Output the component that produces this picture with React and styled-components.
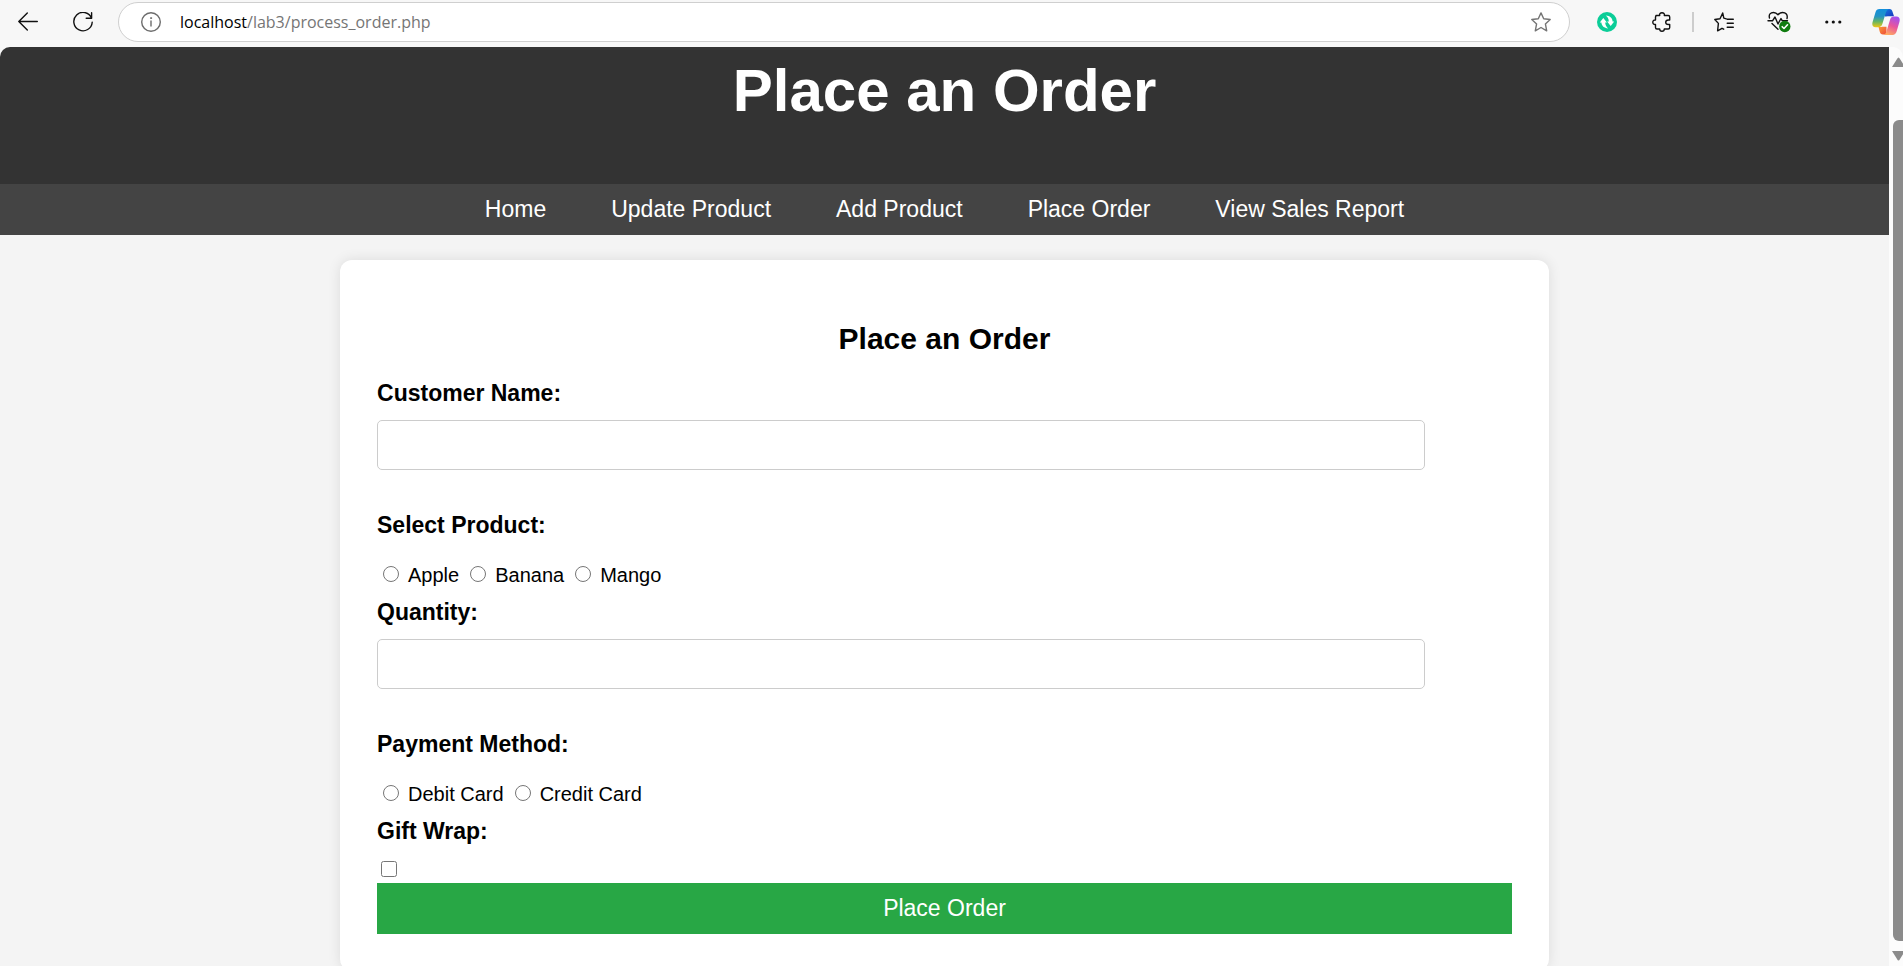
import React from "react";
import styled, { createGlobalStyle } from "styled-components";

const GlobalStyle = createGlobalStyle`
  * { box-sizing: border-box; }
  body {
    margin: 0;
    font-family: "Liberation Sans", Arial, sans-serif;
    color: #000;
    background: #f7f7f7;
  }
`;

const Browser = styled.div`
  height: 100vh;
  display: flex;
  flex-direction: column;
  overflow: hidden;
`;

/* ---------- browser toolbar ---------- */

const Toolbar = styled.div`
  flex: none;
  height: 47px;
  padding: 2px 0 5px 8px;
  display: flex;
  align-items: center;
  gap: 15px;
  background: #f7f7f7;
`;

const ToolButton = styled.button`
  flex: none;
  width: ${(p) => p.$width || 40}px;
  height: 40px;
  padding: 0;
  border: 0;
  background: none;
  display: flex;
  align-items: center;
  justify-content: center;
  color: ${(p) => p.$color || "#111"};
`;

const AddressBar = styled.div`
  flex: 1;
  min-width: 0;
  height: 40px;
  margin-right: 2px;
  padding: 0 18px 0 22px;
  display: flex;
  align-items: center;
  gap: 19px;
  border: 1px solid #cfcfcf;
  border-radius: 20px;
  background: #fff;
`;

const Address = styled.div`
  flex: 1;
  min-width: 0;
  overflow: hidden;
  white-space: nowrap;
  font-family: "Open Sans", "Noto Sans", sans-serif;
  font-size: 16px;
  line-height: 24px;
  color: #757575;
`;

const Host = styled.span`
  color: #000;
`;

const Separator = styled.span`
  flex: none;
  width: 2px;
  height: 20px;
  margin: 0 -5px;
  background: #cdcdcd;
`;

/* ---------- page area and scrollbar ---------- */

const Viewport = styled.div`
  flex: 1;
  min-height: 0;
  display: flex;
`;

const Page = styled.div`
  flex: 1;
  min-width: 0;
  overflow: hidden;
  border-top-left-radius: 10px;
  background: #f4f4f4;
`;

const Scrollbar = styled.div`
  flex: none;
  width: 14px;
  padding: 10px 0 5px 3px;
  display: flex;
  flex-direction: column;
  overflow: hidden;
  background: #fcfcfc;
  border-top-right-radius: 10px;
`;

const Thumb = styled.div`
  flex: 1;
  width: 15px;
  margin: 53px 0 10px 1px;
  border-radius: 6px;
  background: #8b8b8b;
`;

const Header = styled.header`
  padding: 10px 0 59px;
  background: #333;
  color: #fff;
  text-align: center;
`;

const Title = styled.h1`
  margin: 0;
  font-size: 60px;
  line-height: 68px;
`;

const Nav = styled.nav`
  padding: 12px 0 13px;
  display: flex;
  justify-content: center;
  gap: 65px;
  background: #444;
`;

const NavLink = styled.a`
  font-size: 23px;
  line-height: 26px;
  color: #fff;
  text-decoration: none;
`;

/* ---------- order form ---------- */

const Card = styled.main`
  width: 64%;
  margin: 25px auto;
  padding: 37px;
  border-radius: 12px;
  background: #fff;
  box-shadow: 0 0 13px rgba(0, 0, 0, 0.1);
`;

const FormTitle = styled.h2`
  margin: 25px 0 24px;
  font-size: 30px;
  line-height: 34px;
  text-align: center;
`;

const Form = styled.form`
  display: flex;
  flex-direction: column;
`;

const Label = styled.label`
  font-size: 23px;
  line-height: 26px;
  font-weight: bold;
`;

const TextInput = styled.input`
  width: calc(90% + 27px);
  height: 50px;
  margin: 14px 0 42px;
  padding: 12px;
  border: 1px solid #ccc;
  border-radius: 5px;
  font: 20px "Liberation Sans", Arial, sans-serif;
`;

const Fieldset = styled.fieldset`
  margin: 0 0 12px;
  padding: 0;
  border: 0;
`;

const Legend = styled.legend`
  padding: 0;
  font-size: 23px;
  line-height: 26px;
  font-weight: bold;
`;

const Options = styled.div`
  padding: 26px 0 0 6px;
  display: flex;
  gap: 11px;
`;

const Option = styled.label`
  display: flex;
  gap: 9px;
  font-size: 20px;
  line-height: 23px;
`;

const Radio = styled.input`
  width: 16px;
  height: 16px;
  margin: 2px 0 0;
`;

const Checkbox = styled.input`
  width: 16px;
  height: 16px;
  margin: 17px 0 6px 4px;
`;

const Submit = styled.button`
  height: 51px;
  padding: 0 0 2px;
  border: 0;
  background: #28a745;
  color: #fff;
  font: 23px/26px "Liberation Sans", Arial, sans-serif;
`;

/* ---------- icons ---------- */

const Icon = ({ size = 20, children, ...rest }) => (
  <svg
    width={size}
    height={size}
    viewBox={`0 0 ${size} ${size}`}
    fill="none"
    stroke="currentColor"
    strokeWidth="1.4"
    strokeLinecap="round"
    strokeLinejoin="round"
    aria-hidden="true"
    {...rest}
  >
    {children}
  </svg>
);

const BackIcon = () => (
  <Icon>
    <path d="M19.3 9.5H.8M9.3 1 .8 9.5 9.3 18" />
  </Icon>
);

const ReloadIcon = () => (
  <Icon>
    <path d="M18.5 6A9.2 9.2 0 1 0 19.2 10.2M18.6.8V6.2H13.2" />
  </Icon>
);

const InfoIcon = () => (
  <Icon stroke="#6c6c6c">
    <circle cx="10" cy="10" r="9.3" />
    <path d="M10 9v5" />
    <circle cx="10" cy="6.1" r=".6" fill="#6c6c6c" strokeWidth=".8" />
  </Icon>
);

const StarIcon = () => (
  <Icon>
    <path d="M10 .9 12.7 6.7 19.2 7.5 14.4 11.9 15.7 18.8 10 15.5 4.3 18.8 5.6 11.9.8 7.5 7.3 6.7Z" />
  </Icon>
);

const SyncIcon = () => (
  <Icon stroke="none">
    <circle cx="10" cy="10" r="10" fill="#0bcd98" />
    <path
      d="M6.300 6 2.800 10.600H4.400C4.600 14 7.200 16.300 11.200 16.400 9.300 15 8.300 13 8.200 10.600H9.900ZM13.700 14 17.200 9.400H15.600C15.400 6 12.800 3.700 8.800 3.600 10.700 5 11.700 7 11.800 9.400H10.100Z"
      fill="#fff"
    />
  </Icon>
);

const PuzzleIcon = () => (
  <Icon>
    <path d="M4 3.5H7.7C7.2 1.8 8.3.8 10 .8s2.800 1 2.300 2.700H16.200Q17.700 3.500 17.700 5V8H16.500C14.800 8 13.700 8.900 13.700 10.200s1.100 2.300 2.800 2.300h1.200v3Q17.700 17 16.200 17H12.300C12.300 18.500 11.400 19.300 10 19.300S7.700 18.500 7.700 17H5Q3.500 17 3.500 15.500V12.500C1.800 12.700.8 11.700.8 10.200S1.800 7.700 3.500 8V5Q3.500 3.500 5 3.500" />
  </Icon>
);

const FavoritesIcon = () => (
  <Icon>
    <path d="M13.200 7.300H19.300M13.200 11.200H19.300M13.200 15.200H19.300M12.300 6.900 9.800 6.200 8.700 1 6 6.700.8 7.500 4.400 11.400 3.600 18.800 8 16.300 9.700 17.200" />
  </Icon>
);

const HealthIcon = () => (
  <Icon size={24}>
    <path d="M2.500 8C1.500 4.500 3.500 2.500 6.500 2.500c2 0 3.400 1 4.500 2.300 1.100-1.300 2.500-2.300 4.500-2.300C18.700 2.500 21 4.500 20 8.500M1 10.800H5.500L8 7 11 14 14 8.500 15.300 10.800H20.500M5 13.500 11 19.200" />
    <circle cx="17.800" cy="16.500" r="5.700" fill="#107c10" stroke="none" />
    <path d="M15.200 16.700 17 18.500 20.500 14.800" stroke="#fff" strokeWidth="1.600" />
  </Icon>
);

const DotsIcon = () => (
  <Icon fill="currentColor" stroke="none">
    <circle cx="2.800" cy="10" r="1.600" />
    <circle cx="9.300" cy="10" r="1.600" />
    <circle cx="15.800" cy="10" r="1.600" />
  </Icon>
);

const CopilotIcon = () => (
  <Icon size={28} stroke="none">
    <defs>
      <linearGradient id="coolLeft" x1="0" y1="0" x2="0" y2="1">
        <stop offset="0" stopColor="#128fdc" />
        <stop offset=".4" stopColor="#2393c4" />
        <stop offset=".7" stopColor="#6ab760" />
        <stop offset="1" stopColor="#f2c713" />
      </linearGradient>
      <linearGradient id="warmRight" x1=".7" y1="0" x2=".3" y2="1">
        <stop offset="0" stopColor="#a24ff0" />
        <stop offset=".5" stopColor="#e9559b" />
        <stop offset="1" stopColor="#ffac60" />
      </linearGradient>
      <linearGradient id="blueTop" x1="0" y1="0" x2="1" y2="1">
        <stop offset="0" stopColor="#167be0" />
        <stop offset="1" stopColor="#1836bd" />
      </linearGradient>
      <linearGradient id="orangeBase" x1="0" y1="0" x2="1" y2="1">
        <stop offset="0" stopColor="#fa9c35" />
        <stop offset="1" stopColor="#ee493c" />
      </linearGradient>
    </defs>
    <path d="M12 1h5.500c1.800 0 2.600 1.200 3.100 3L22 8.300h-4c-1.800 0-3 .3-5 .2z" fill="url(#blueTop)" />
    <path d="M6.500 19C9 19 10.500 18.500 12.500 18.800h2L14.500 26.500H11c-2 0-2.800-1.200-3.300-3z" fill="url(#orangeBase)" />
    <path d="M7.500 1H17c-2 .5-2.800 2.500-3.400 4.500L10.500 15.500C9.800 18 8.500 19.300 6 19.300H3.500C.5 19.300-.2 17 .6 14L3.500 4.200C4.200 2.200 5.300 1 7.500 1z" fill="url(#coolLeft)" />
    <path d="M20.500 27H11.500c2-.5 2.700-2.500 3.300-4.500l3-10C18.500 10 19.500 8.500 22 8.500h2.500c3 0 3.700 2.400 2.900 5.500l-2.900 9.800c-.7 2-1.800 3.200-4 3.200z" fill="url(#warmRight)" />
  </Icon>
);

const ArrowIcon = ({ down }) => (
  <svg width="13" height="10" viewBox="0 0 13 10" fill="#8b8b8b" aria-hidden="true">
    <path d={down ? "M0 0H13L8 8Q6.500 11 5 8Z" : "M0 10H13L8 2Q6.500-1 5 2Z"} />
  </svg>
);

const links = ["Home", "Update Product", "Add Product", "Place Order", "View Sales Report"];

const RadioGroup = ({ title, name, options }) => (
  <Fieldset>
    <Legend>{title}</Legend>
    <Options>
      {options.map((option) => (
        <Option key={option}>
          <Radio type="radio" name={name} value={option} />
          {option}
        </Option>
      ))}
    </Options>
  </Fieldset>
);

export default function App() {
  return (
    <Browser>
      <GlobalStyle />
      <Toolbar>
        <ToolButton aria-label="Back"><BackIcon /></ToolButton>
        <ToolButton aria-label="Refresh"><ReloadIcon /></ToolButton>
        <AddressBar>
          <InfoIcon />
          <Address role="textbox" aria-label="Address" tabIndex={0}>
            <Host>localhost</Host>/lab3/process_order.php
          </Address>
          <ToolButton $width={20} $color="#757575" aria-label="Add to favorites">
            <StarIcon />
          </ToolButton>
        </AddressBar>
        <ToolButton aria-label="Sync"><SyncIcon /></ToolButton>
        <ToolButton aria-label="Extensions"><PuzzleIcon /></ToolButton>
        <Separator />
        <ToolButton aria-label="Favorites"><FavoritesIcon /></ToolButton>
        <ToolButton aria-label="Browser essentials"><HealthIcon /></ToolButton>
        <ToolButton aria-label="More"><DotsIcon /></ToolButton>
        <ToolButton $width={34} aria-label="Copilot"><CopilotIcon /></ToolButton>
      </Toolbar>
      <Viewport>
        <Page>
          <Header>
            <Title>Place an Order</Title>
          </Header>
          <Nav>
            {links.map((link) => (
              <NavLink key={link} href="#">{link}</NavLink>
            ))}
          </Nav>
          <Card>
            <FormTitle>Place an Order</FormTitle>
            <Form>
              <Label htmlFor="customer">Customer Name:</Label>
              <TextInput id="customer" type="text" />
              <RadioGroup title="Select Product:" name="product" options={["Apple", "Banana", "Mango"]} />
              <Label htmlFor="quantity">Quantity:</Label>
              <TextInput id="quantity" type="text" />
              <RadioGroup title="Payment Method:" name="payment" options={["Debit Card", "Credit Card"]} />
              <Label htmlFor="gift">Gift Wrap:</Label>
              <Checkbox id="gift" type="checkbox" />
              <Submit type="button">Place Order</Submit>
            </Form>
          </Card>
        </Page>
        <Scrollbar>
          <ArrowIcon />
          <Thumb />
          <ArrowIcon down />
        </Scrollbar>
      </Viewport>
    </Browser>
  );
}
